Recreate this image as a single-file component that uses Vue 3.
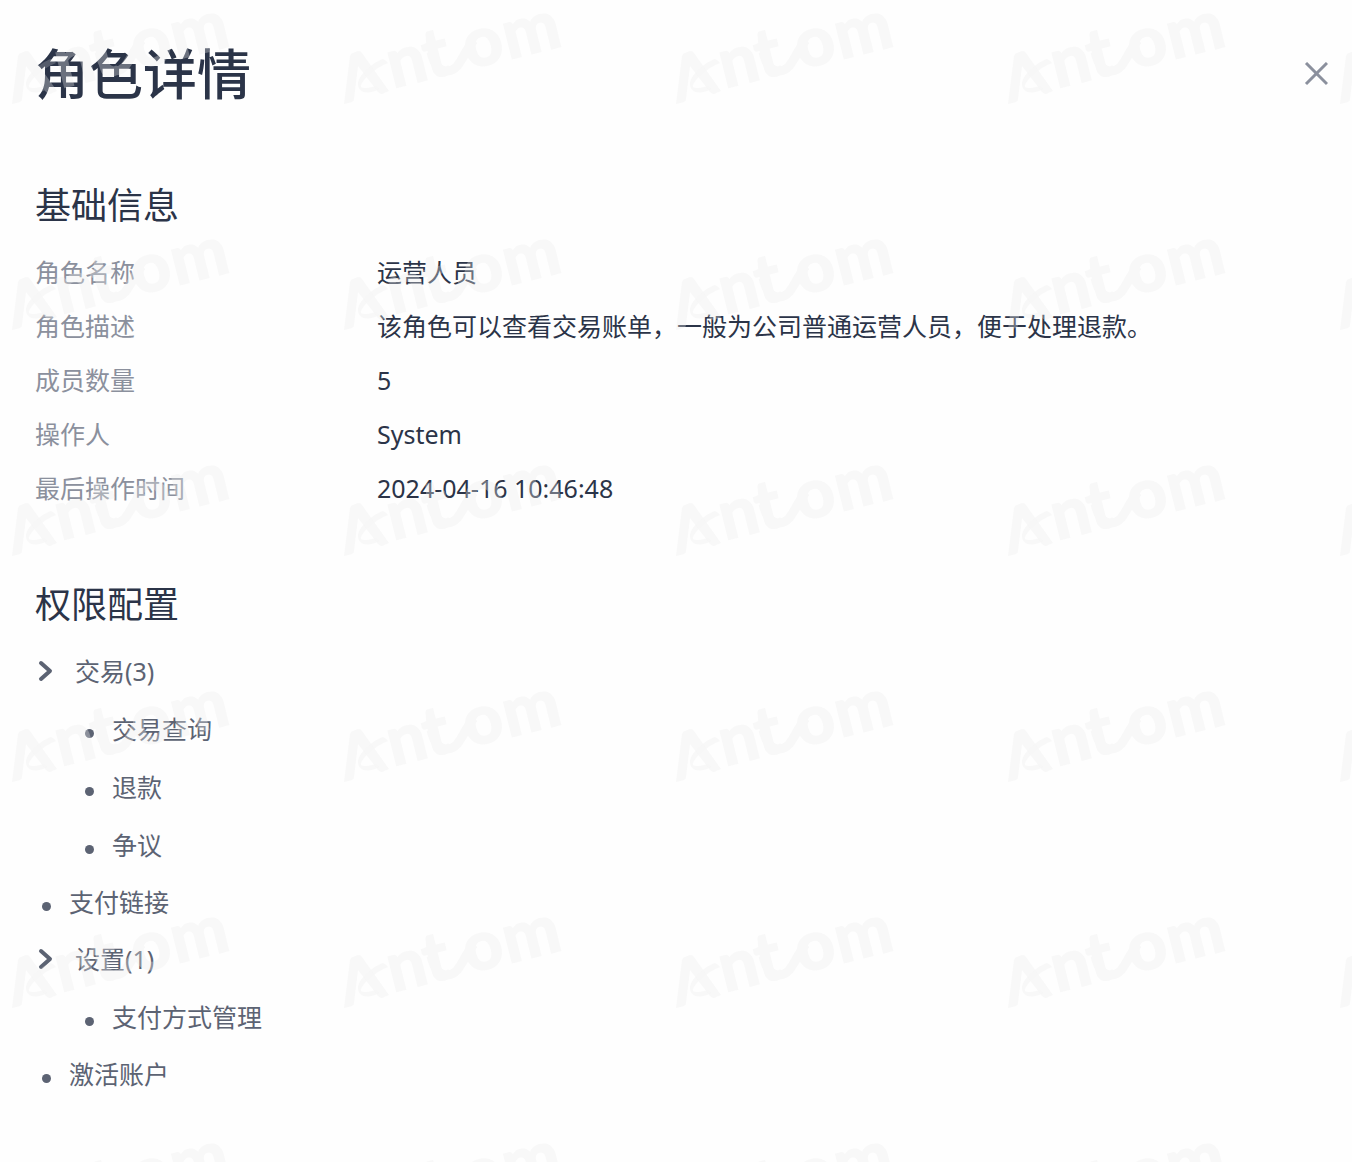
<script setup>
import { ref } from 'vue'

const emit = defineEmits(['close'])

const info = [
  { label: '角色名称', value: '运营人员' },
  { label: '角色描述', value: '该角色可以查看交易账单，一般为公司普通运营人员，便于处理退款。' },
  { label: '成员数量', value: '5' },
  { label: '操作人', value: 'System' },
  { label: '最后操作时间', value: '2024-04-16 10:46:48' }
]

const permissions = ref([
  { name: '交易', open: true, children: ['交易查询', '退款', '争议'] },
  { name: '支付链接' },
  { name: '设置', open: true, children: ['支付方式管理'] },
  { name: '激活账户' }
])
</script>

<template>
  <main class="role-detail">
    <!-- 标题栏 -->
    <header class="header">
      <h1 class="title">角色详情</h1>
      <button class="close-btn" type="button" aria-label="关闭" @click="emit('close')">
        <svg width="24" height="24" viewBox="0 0 24 24">
          <path d="M2 1 23 22M23 1 2 22" />
        </svg>
      </button>
    </header>

    <!-- 基础信息 -->
    <section class="section">
      <h2 class="section-title">基础信息</h2>
      <dl class="info">
        <div v-for="item in info" :key="item.label" class="info-row">
          <dt>{{ item.label }}</dt>
          <dd>{{ item.value }}</dd>
        </div>
      </dl>
    </section>

    <!-- 权限配置 -->
    <section class="section">
      <h2 class="section-title">权限配置</h2>
      <ul class="tree">
        <li v-for="node in permissions" :key="node.name">
          <template v-if="node.children">
            <button
              class="group-btn"
              type="button"
              :aria-expanded="node.open"
              @click="node.open = !node.open"
            >
              <svg class="arrow" width="20" height="24" viewBox="0 0 20 24">
                <path d="M6 4 15 12 6 20" />
              </svg>
              <span>{{ node.name }}({{ node.children.length }})</span>
            </button>
            <ul v-show="node.open" class="sub-tree">
              <li v-for="child in node.children" :key="child" class="leaf">{{ child }}</li>
            </ul>
          </template>
          <div v-else class="leaf">{{ node.name }}</div>
        </li>
      </ul>
    </section>

    <!-- 水印 -->
    <svg class="watermark" aria-hidden="true">
      <defs>
        <pattern id="brand" width="332" height="226" patternUnits="userSpaceOnUse">
          <g class="mark">
            <path d="M12 104 18 56Q19 53 21 53L26 51Q29 51 30 53L57 91 50 94Q48 94 46 92L26 66 22 99Q22 101 20 102Z" />
            <path class="orbit" d="M51 59C39 63 26 76 26 84C26 93 36 95 48 89L44 86C37 88 31 89 29 87C28 82 41 69 56 63Q54 60 51 59Z" />
            <g class="letters" transform="translate(65 87) rotate(-14)">
              <text x="-4" y="0">n</text>
              <text x="33" y="0">t</text>
              <text x="74" y="0">o</text>
              <text x="115" y="0">m</text>
            </g>
            <path class="link" d="M99 52C102 65 107 71 115 71C128 71 130 54 142 40" />
          </g>
        </pattern>
      </defs>
      <rect width="100%" height="100%" fill="url(#brand)" />
    </svg>
  </main>
</template>

<style>
body {
  margin: 0;
  background: #fefefe;
}
</style>

<style scoped>
.role-detail {
  position: relative;
  box-sizing: border-box;
  min-height: 100vh;
  padding: 38px 24px 60px 35px;
  overflow: hidden;
  font-family: "Noto Sans", "Noto Sans CJK SC", sans-serif;
  font-size: 25px;
  line-height: 30px;
  color: #2b3448;
}

/* 标题栏 */
.header {
  display: flex;
  justify-content: space-between;
  align-items: center;
}

.title {
  margin: 0;
  font-size: 54px;
  line-height: 72px;
  font-weight: 500;
}

.close-btn {
  display: flex;
  padding: 0;
  border: none;
  background: none;
  cursor: pointer;
}

.close-btn path {
  fill: none;
  stroke: #8b909d;
  stroke-width: 3;
}

/* 分区 */
.section {
  margin-top: 72px;
}

.section + .section {
  margin-top: 78px;
}

.section-title {
  margin: 0 0 27px;
  font-size: 36px;
  line-height: 48px;
  font-weight: 400;
}

.info {
  display: flex;
  flex-direction: column;
  gap: 24px;
  margin: 0;
}

.info-row {
  display: grid;
  grid-template-columns: 342px 1fr;
}

.info dt {
  color: #8b909d;
}

.info dd {
  margin: 0;
}

/* 权限树 */
.tree,
.sub-tree {
  display: flex;
  flex-direction: column;
  margin: 0;
  padding: 0;
  list-style: none;
  color: #5c6373;
}

.tree {
  gap: 27px;
}

.sub-tree {
  gap: 28px;
  padding: 28px 0 0 43px;
}

.group-btn {
  display: flex;
  align-items: center;
  gap: 20px;
  padding: 0;
  border: none;
  background: none;
  font: inherit;
  color: inherit;
  cursor: pointer;
}

.arrow path {
  fill: none;
  stroke: #5c6373;
  stroke-width: 4;
  stroke-linecap: round;
  stroke-linejoin: round;
}

.leaf {
  display: flex;
  align-items: center;
  gap: 18px;
}

.leaf::before {
  content: "";
  width: 9px;
  height: 9px;
  margin: 8px 0 0 7px;
  border-radius: 50%;
  background: #5c6373;
}

/* 水印盖在内容上方，不响应鼠标 */
.watermark {
  position: absolute;
  inset: 0;
  width: 100%;
  height: 100%;
  pointer-events: none;
}

.mark {
  fill: #ededed;
  opacity: 0.33;
}

.letters {
  font-family: Lato, sans-serif;
  font-size: 68px;
  font-weight: 700;
  stroke: #ededed;
  stroke-width: 2;
}

.orbit {
  fill: #e6e6e6;
  opacity: 0.7;
}

.link {
  fill: none;
  stroke: #ededed;
  stroke-width: 9;
}
</style>
